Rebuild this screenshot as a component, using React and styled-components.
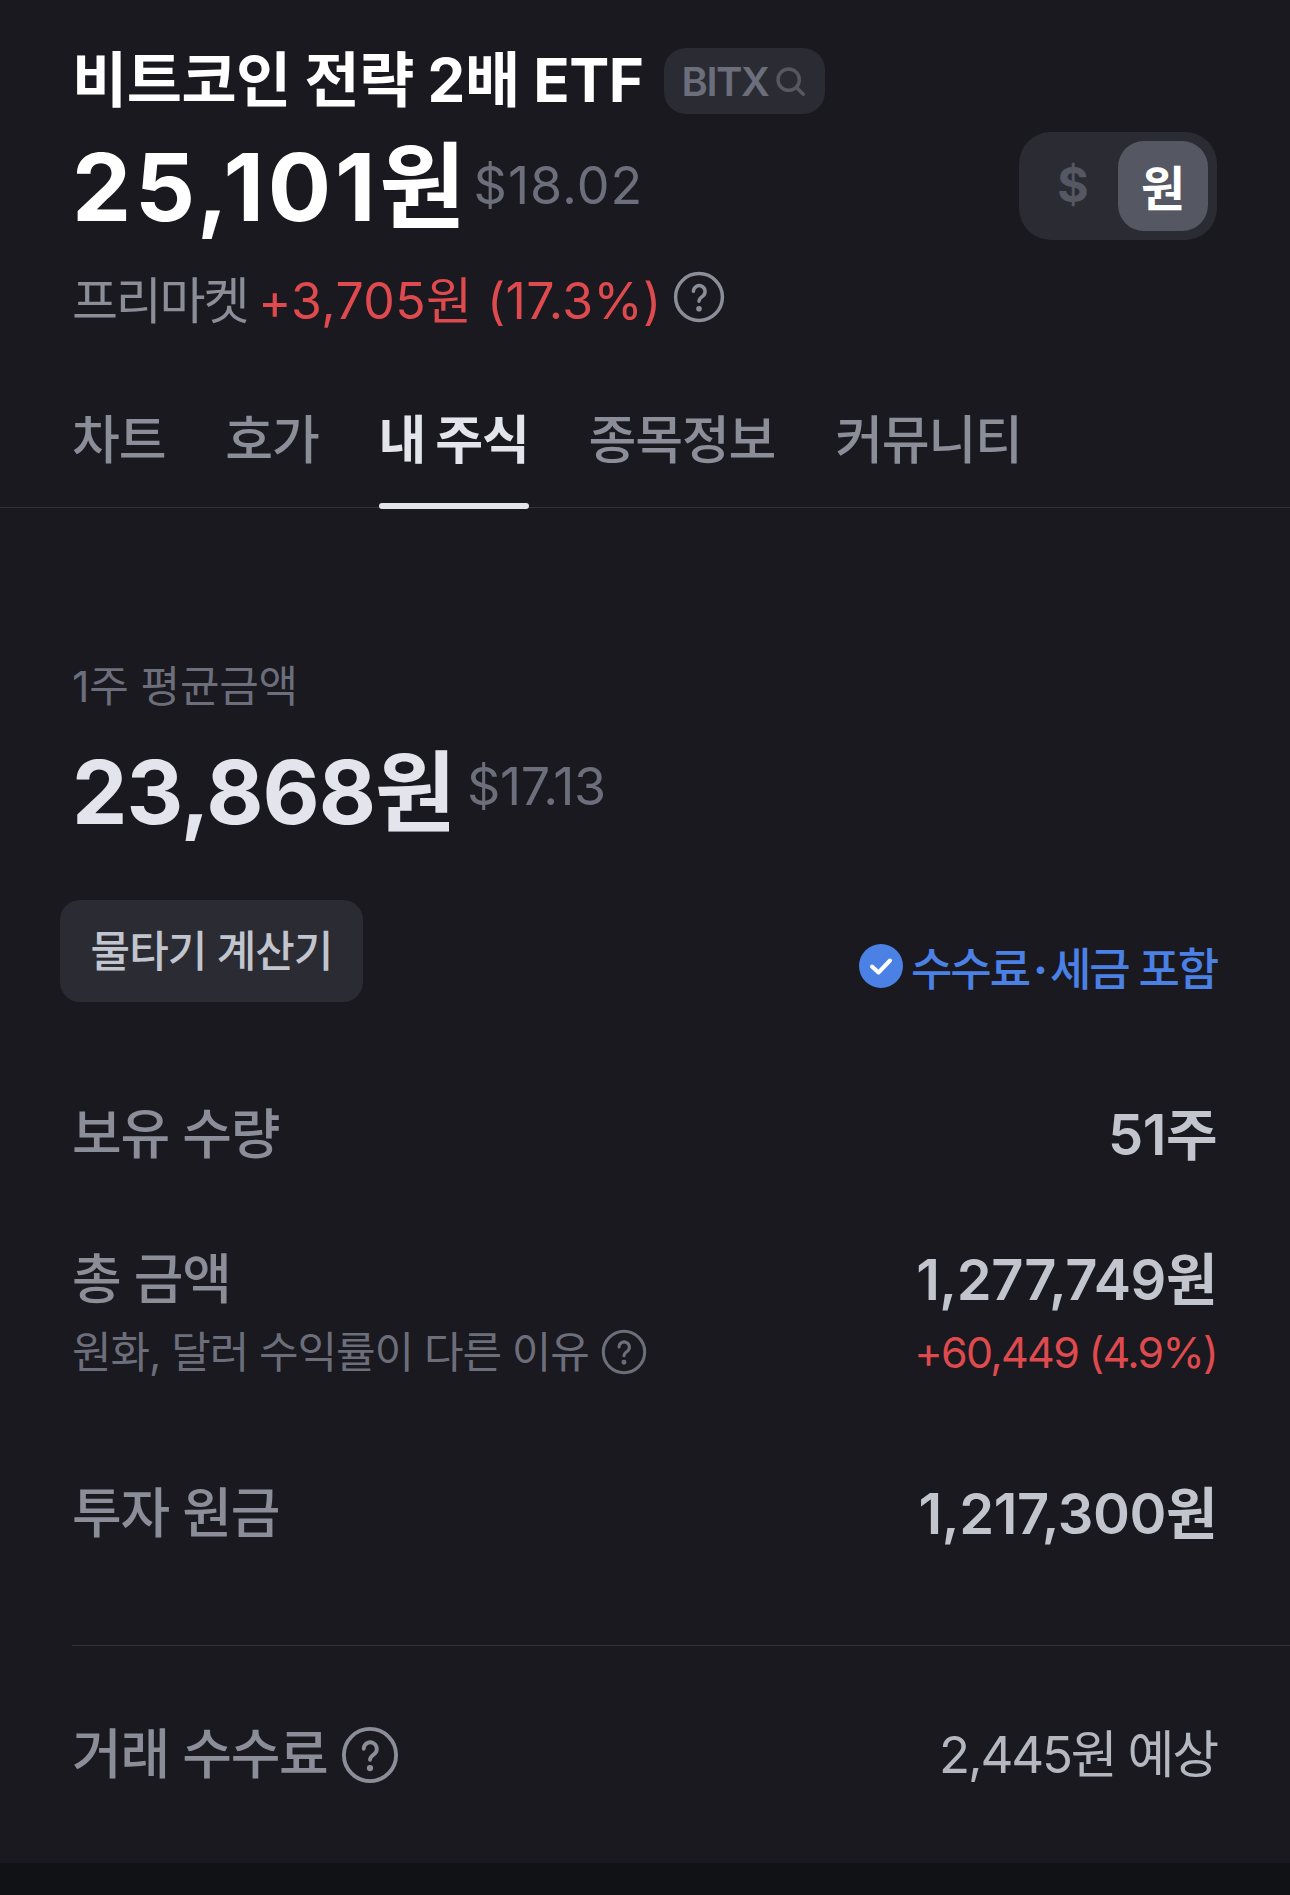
import React from "react";
import styled, { createGlobalStyle } from "styled-components";

const GlobalStyle = createGlobalStyle`
  html, body {
    margin: 0;
    padding: 0;
    background: #19191f;
  }
  * { box-sizing: border-box; }
`;

const Page = styled.div`
  width: 1290px;
  height: 1895px;
  background: #19191f;
  font-family: "Inter", "Noto Sans CJK KR", sans-serif;
  display: flex;
  flex-direction: column;
  overflow: hidden;
`;

const Header = styled.header`
  padding: 40px 73px 0 72px;
  display: flex;
  align-items: flex-start;
  justify-content: space-between;
`;

const HeaderMain = styled.div`
  display: flex;
  flex-direction: column;
`;

const TitleRow = styled.div`
  display: flex;
  align-items: center;
  height: 80px;
`;

const Title = styled.h1`
  margin: 0;
  font-size: 60px;
  font-weight: 700;
  letter-spacing: -0.5px;
  line-height: 80px;
  color: #fff;
`;

const TickerChip = styled.div`
  margin-left: 20px;
  margin-top: 2px;
  height: 66px;
  width: 161px;
  border-radius: 22px;
  background: #2b2c33;
  color: #6c6e7b;
  font-size: 40px;
  font-weight: 600;
  letter-spacing: -1.5px;
  display: flex;
  align-items: center;
  padding-left: 18px;
  gap: 6px;
`;

const PriceRow = styled.div`
  display: flex;
  align-items: center;
  gap: 4px;
  height: 110px;
  margin-top: 12px;
`;

const BigPrice = styled.span`
  font-size: ${(p) => p.$size}px;
  font-weight: 700;
  letter-spacing: ${(p) => p.$spacing}px;
  line-height: 110px;
  color: ${(p) => p.$color};
`;

const Dollar = styled.span`
  font-size: ${(p) => p.$size}px;
  letter-spacing: ${(p) => p.$spacing}px;
  margin-bottom: ${(p) => p.$lift}px;
  color: #6c6e7b;
`;

const PreMarket = styled.div`
  display: flex;
  align-items: center;
  gap: 11px;
  margin-top: 20px;
  height: 70px;
  font-size: 50px;
`;

const Muted = styled.span`
  letter-spacing: -2.2px;
  color: #8b8d99;
`;

const Red = styled.span`
  letter-spacing: 0.4px;
  color: #df4a4e;
`;

const CurrencyToggle = styled.div`
  margin-top: 92px;
  width: 198px;
  height: 108px;
  border-radius: 32px;
  background: #2b2c33;
  display: flex;
  align-items: center;
  justify-content: flex-end;
  padding-right: 9px;
`;

const CurrencyOption = styled.div`
  width: 90px;
  height: 90px;
  border-radius: 26px;
  display: flex;
  align-items: center;
  justify-content: center;
  padding-bottom: 3px;
  font-size: 48px;
  font-weight: 700;
  color: ${(p) => (p.$active ? "#fff" : "#555762")};
  background: ${(p) => (p.$active ? "#555762" : "transparent")};
`;

const Tabs = styled.nav`
  display: flex;
  gap: 60px;
  padding: 0 72px;
  height: 176px;
  border-bottom: 1px solid #32323b;
`;

const Tab = styled.div`
  position: relative;
  height: 175px;
  padding-top: 34px;
  display: flex;
  align-items: center;
  font-size: 52px;
  letter-spacing: -1.2px;
  word-spacing: ${(p) => (p.$active ? "-1px" : "0")};
  font-weight: ${(p) => (p.$active ? 700 : 500)};
  color: ${(p) => (p.$active ? "#e4e5ec" : "#8b8d99")};

  ${(p) =>
    p.$active &&
    `
    &::after {
      content: "";
      position: absolute;
      left: 0;
      right: 0;
      bottom: -2px;
      height: 6px;
      border-radius: 3px;
      background: #e4e5ec;
    }
  `}
`;

const Summary = styled.section`
  padding: 148px 72px 0;
`;

const Caption = styled.div`
  font-size: 43px;
  line-height: 60px;
  letter-spacing: -0.2px;
  color: #6c6e7b;
`;

const AverageRow = styled.div`
  display: flex;
  align-items: center;
  gap: 12px;
  margin-top: 21px;
  height: 110px;
`;

const ActionRow = styled.div`
  display: flex;
  align-items: flex-end;
  justify-content: space-between;
  margin-top: 53px;
  margin-left: -12px;
  padding-right: 1px;
`;

const CalcButton = styled.button`
  width: 303px;
  height: 102px;
  border: 0;
  border-radius: 20px;
  background: #2b2c33;
  color: #c3c5ce;
  font-family: inherit;
  font-size: 43px;
  letter-spacing: -1px;
  font-weight: 500;
  padding: 0;
  padding-bottom: 6px;
`;

const FeeNote = styled.div`
  display: flex;
  align-items: center;
  gap: 8px;
  height: 70px;
  margin-bottom: 1px;
  font-size: 45px;
  font-weight: 500;
  letter-spacing: -2.1px;
  color: #4b80e4;
`;

const FeeDot = styled.span`
  font-weight: 700;
  margin: 0 4px;
`;

const Rows = styled.section`
  padding: 0 73px 0 72px;
  display: flex;
  flex-direction: column;
`;

const Row = styled.div`
  display: flex;
  align-items: flex-start;
  justify-content: space-between;
  margin-top: ${(p) => p.$top}px;
`;

const RowLabel = styled.div`
  display: flex;
  align-items: center;
  gap: 13px;
  font-size: 54px;
  font-weight: 500;
  line-height: 72px;
  letter-spacing: -1.2px;
  color: #8b8d99;
`;

const RowValue = styled.div`
  font-size: 56px;
  line-height: 72px;
  letter-spacing: -0.45px;
  font-weight: 600;
  color: #c3c5ce;
  text-align: right;
`;

const EstimateValue = styled.div`
  font-size: 51px;
  line-height: 72px;
  letter-spacing: -2.2px;
  font-weight: 400;
  color: #b4b6c0;
  text-align: right;
`;

const Stack = styled.div`
  display: flex;
  flex-direction: column;
  align-items: ${(p) => (p.$right ? "flex-end" : "flex-start")};
`;

const SubLabel = styled.div`
  display: flex;
  align-items: center;
  gap: 12px;
  font-size: 43px;
  line-height: 60px;
  letter-spacing: -1.1px;
  color: #6c6e7b;
  margin-top: 6px;
`;

const SubValue = styled.div`
  font-size: 43px;
  line-height: 60px;
  letter-spacing: -1.7px;
  color: #df4a4e;
  margin-top: 6px;
`;

const Divider = styled.hr`
  margin: 95px 0 0 72px;
  border: 0;
  height: 1px;
  background: #32323b;
`;

const Footer = styled.div`
  margin-top: auto;
  height: 32px;
  background: #111215;
`;

function HelpIcon({ size, color }) {
  return (
    <svg width={size} height={size} viewBox="0 0 24 24" fill="none" stroke={color} strokeWidth="1.6" strokeLinecap="round">
      <circle cx="12" cy="12" r="10.8" />
      <path d="M9.4 9.4a2.7 2.7 0 1 1 4.2 2.3c-1 .7-1.6 1.2-1.6 2.3" />
      <circle cx="12" cy="17.4" r="0.5" fill={color} />
    </svg>
  );
}

function SearchIcon() {
  return (
    <svg width="32" height="32" viewBox="0 0 24 24" fill="none" stroke="#555762" strokeWidth="2.6" strokeLinecap="round">
      <circle cx="11" cy="11" r="8" />
      <path d="M17 17l5 5" />
    </svg>
  );
}

function CheckBadge() {
  return (
    <svg width="44" height="44" viewBox="0 0 44 44">
      <circle cx="22" cy="22" r="22" fill="#4b80e4" />
      <path d="M13 22.5l6.5 6L31 16.5" fill="none" stroke="#fff" strokeWidth="4" strokeLinecap="round" strokeLinejoin="round" />
    </svg>
  );
}

export default function App() {
  return (
    <Page>
      <GlobalStyle />
      <Header>
        <HeaderMain>
          <TitleRow>
            <Title>비트코인 전략 2배 ETF</Title>
            <TickerChip>
              BITX
              <SearchIcon />
            </TickerChip>
          </TitleRow>
          <PriceRow>
            <BigPrice $size={94} $spacing={3.8} $color="#fff">25,101원</BigPrice>
            <Dollar $size={52} $spacing={1} $lift={4}>$18.02</Dollar>
          </PriceRow>
          <PreMarket>
            <Muted>프리마켓</Muted>
            <Red>+3,705원 (17.3%)</Red>
            <HelpIcon size={52} color="#8b8d99" />
          </PreMarket>
        </HeaderMain>
        <CurrencyToggle>
          <CurrencyOption>$</CurrencyOption>
          <CurrencyOption $active>원</CurrencyOption>
        </CurrencyToggle>
      </Header>

      <Tabs>
        <Tab>차트</Tab>
        <Tab>호가</Tab>
        <Tab $active>내 주식</Tab>
        <Tab>종목정보</Tab>
        <Tab>커뮤니티</Tab>
      </Tabs>

      <Summary>
        <Caption>1주 평균금액</Caption>
        <AverageRow>
          <BigPrice $size={88} $spacing={-1} $color="#e4e5ec">23,868원</BigPrice>
          <Dollar $size={52} $spacing={-0.4} $lift={12}>$17.13</Dollar>
        </AverageRow>
        <ActionRow>
          <CalcButton>물타기 계산기</CalcButton>
          <FeeNote>
            <CheckBadge />
            <span>수수료<FeeDot>·</FeeDot>세금 포함</span>
          </FeeNote>
        </ActionRow>
      </Summary>

      <Rows>
        <Row $top={97}>
          <RowLabel>보유 수량</RowLabel>
          <RowValue>51주</RowValue>
        </Row>
        <Row $top={73}>
          <Stack>
            <RowLabel>총 금액</RowLabel>
            <SubLabel>
              원화, 달러 수익률이 다른 이유
              <HelpIcon size={46} color="#6c6e7b" />
            </SubLabel>
          </Stack>
          <Stack $right>
            <RowValue>1,277,749원</RowValue>
            <SubValue>+60,449 (4.9%)</SubValue>
          </Stack>
        </Row>
        <Row $top={96}>
          <RowLabel>투자 원금</RowLabel>
          <RowValue>1,217,300원</RowValue>
        </Row>
      </Rows>

      <Divider />

      <Rows>
        <Row $top={73}>
          <RowLabel>
            거래 수수료
            <HelpIcon size={58} color="#8b8d99" />
          </RowLabel>
          <EstimateValue>2,445원 예상</EstimateValue>
        </Row>
      </Rows>

      <Footer />
    </Page>
  );
}
